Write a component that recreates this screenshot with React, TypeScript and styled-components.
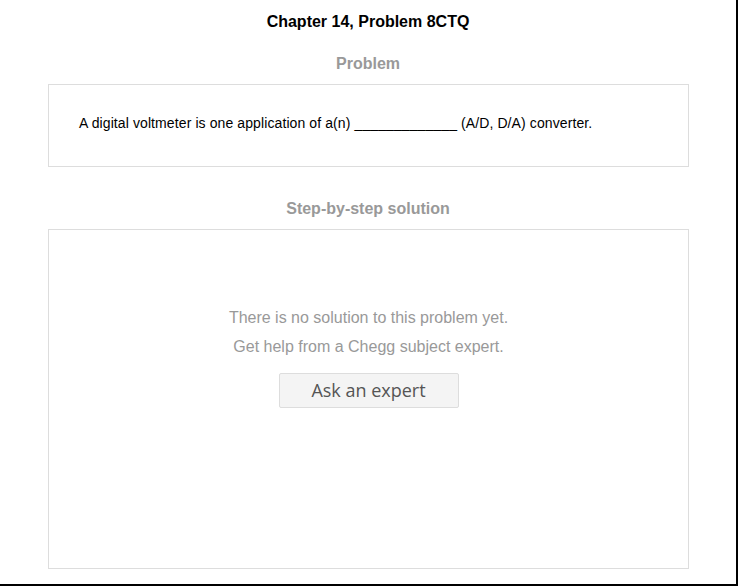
import React from "react";
import styled, { createGlobalStyle } from "styled-components";

const Global = createGlobalStyle`
  html, body { margin: 0; padding: 0; background: #fff; }
  body { font-family: "Liberation Sans", Arial, sans-serif; }
`;

const Page = styled.div`
  box-sizing: border-box;
  width: 738px;
  height: 586px;
  border-right: 2px solid #000;
  border-bottom: 2px solid #000;
  display: flex;
  flex-direction: column;
  align-items: stretch;
  overflow: hidden;
`;

const Title = styled.h1`
  margin: 13px 0 0;
  font-size: 16px;
  line-height: 18px;
  font-weight: bold;
  color: #000;
  text-align: center;
`;

const SectionHeading = styled.h2<{ $top: number }>`
  margin: ${(p) => p.$top}px 0 11px;
  font-size: 16px;
  line-height: 18px;
  font-weight: bold;
  color: #999;
  text-align: center;
`;

const Card = styled.div<{ $height: number }>`
  box-sizing: border-box;
  margin: 0 47px 0 48px;
  height: ${(p) => p.$height}px;
  border: 1px solid #ddd;
  background: #fff;
`;

const ProblemText = styled.p`
  margin: 0;
  padding: 30px 30px 0;
  font-size: 14px;
  letter-spacing: 0.1px;
  line-height: 16px;
  color: #000;
`;

const Empty = styled.div`
  display: flex;
  flex-direction: column;
  align-items: center;
  padding-top: 73px;
`;

const Note = styled.p`
  margin: 0;
  font-size: 16px;
  line-height: 29px;
  color: #999;
`;

const AskButton = styled.button`
  box-sizing: border-box;
  margin-top: 12px;
  width: 180px;
  height: 35px;
  border: 1px solid #ddd;
  border-radius: 2px;
  background: #f4f4f4;
  color: #555;
  font-family: "Open Sans", "Noto Sans", sans-serif;
  font-size: 18px;
  line-height: 33px;
  padding: 0;
  cursor: pointer;
`;

export default function App() {
  return (
    <>
      <Global />
      <Page>
        <Title>Chapter 14, Problem 8CTQ</Title>
        <SectionHeading $top={24}>Problem</SectionHeading>
        <Card $height={83}>
          <ProblemText>
            A digital voltmeter is one application of a(n) _____________ (A/D, D/A) converter.
          </ProblemText>
        </Card>
        <SectionHeading $top={33}>Step-by-step solution</SectionHeading>
        <Card $height={340}>
          <Empty>
            <Note>There is no solution to this problem yet.</Note>
            <Note>Get help from a Chegg subject expert.</Note>
            <AskButton>Ask an expert</AskButton>
          </Empty>
        </Card>
      </Page>
    </>
  );
}
